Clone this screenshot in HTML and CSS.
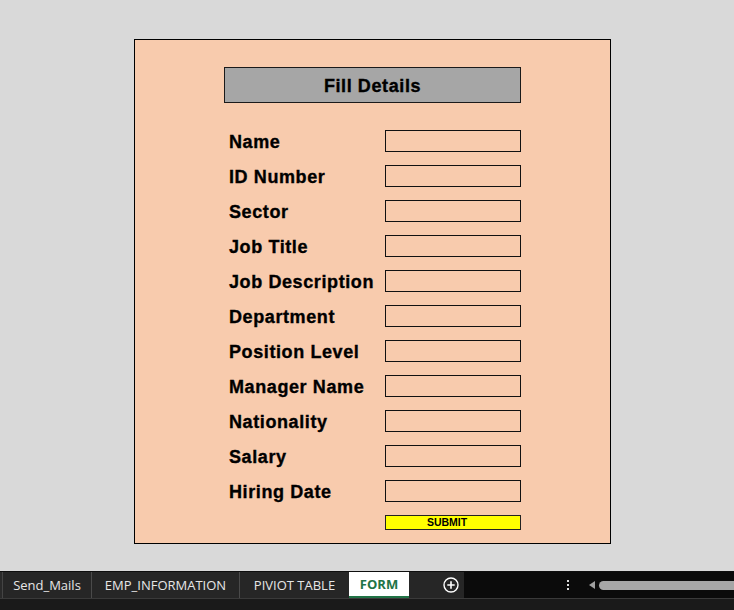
FILE: index.html
```html
<!DOCTYPE html>
<html>
<head>
<meta charset="utf-8">
<link rel="stylesheet" href="styles.css">
</head>
<body>
<div class="sheet">
  <div class="panel">
    <div class="title">Fill Details</div>
    <div class="fields">
      <div class="label">Name</div><div class="box"></div>
      <div class="label">ID Number</div><div class="box"></div>
      <div class="label">Sector</div><div class="box"></div>
      <div class="label">Job Title</div><div class="box"></div>
      <div class="label">Job Description</div><div class="box"></div>
      <div class="label">Department</div><div class="box"></div>
      <div class="label">Position Level</div><div class="box"></div>
      <div class="label">Manager Name</div><div class="box"></div>
      <div class="label">Nationality</div><div class="box"></div>
      <div class="label">Salary</div><div class="box"></div>
      <div class="label">Hiring Date</div><div class="box"></div>
    </div>
    <div class="submit">SUBMIT</div>
  </div>
</div>
<div class="tabbar">
  <div class="tabrow">
    <div class="edge"></div>
    <div class="tab t1">Send_Mails</div>
    <div class="tab t2">EMP_INFORMATION</div>
    <div class="tab t3">PIVIOT TABLE</div>
    <div class="tab active">FORM</div>
    <div class="add">
      <svg width="16" height="16" viewBox="0 0 16 16"><circle cx="8" cy="8" r="7" fill="none" stroke="#fff" stroke-width="1.4"/><path d="M8 4.3v7.4M4.3 8h7.4" stroke="#fff" stroke-width="1.6"/></svg>
    </div>
    <div class="rest">
      <div class="dots"><span></span><span></span><span></span></div>
      <div class="arrow"></div>
      <div class="thumb"></div>
    </div>
  </div>
  <div class="status"></div>
</div>
</body>
</html>
```

FILE: styles.css
```css
html, body {
  margin: 0;
  padding: 0;
}
body {
  width: 734px;
  height: 610px;
  overflow: hidden;
  background: #d9d9d9;
  font-family: "Liberation Sans", Arial, sans-serif;
}
.sheet {
  height: 571px;
  box-sizing: border-box;
  padding: 39px 0 0 134px;
}
.panel {
  width: 477px;
  height: 505px;
  box-sizing: border-box;
  border: 1px solid #000;
  background: #f8cbad;
  padding: 27px 0 0 89px;
}
.title {
  width: 297px;
  height: 36px;
  box-sizing: border-box;
  border: 1px solid #1a1a1a;
  background: #a6a6a6;
  display: flex;
  align-items: center;
  justify-content: center;
  padding-top: 2px;
  font-weight: bold;
  font-size: 18px;
  letter-spacing: 0.6px;
  -webkit-text-stroke: 0.35px #000;
  color: #000;
}
.fields {
  margin-top: 27px;
  display: grid;
  grid-template-columns: 161px 136px;
  grid-auto-rows: 22px;
  row-gap: 13px;
}
.label {
  padding: 2px 0 0 5px;
  display: flex;
  align-items: center;
  font-weight: bold;
  font-size: 18px;
  letter-spacing: 0.6px;
  -webkit-text-stroke: 0.35px #000;
  color: #000;
  white-space: nowrap;
}
.box {
  box-sizing: border-box;
  border: 1px solid #111;
}
.submit {
  margin: 13px 0 0 161px;
  width: 136px;
  height: 15px;
  box-sizing: border-box;
  border: 1px solid #222;
  background: #ffff00;
  padding-right: 12px;
  font-weight: bold;
  font-size: 10.5px;
  line-height: 13px;
  text-align: center;
  color: #000;
}
.tabbar {
  height: 39px;
  background: #0b0b0b;
  font-family: "Open Sans", "Noto Sans", sans-serif;
}
.tabrow {
  height: 27px;
  box-sizing: border-box;
  border-top: 1px solid #0e0e0e;
  display: flex;
}
.edge {
  width: 2px;
  background: #2a2a2a;
  border-right: 1px solid #444;
}
.tab {
  background: #262626;
  color: #e6e6e6;
  font-size: 13px;
  display: flex;
  align-items: center;
  justify-content: center;
  box-sizing: border-box;
}
.t1 { width: 89px; border-right: 1px solid #4a4a4a; }
.t2 { width: 148px; border-right: 1px solid #4a4a4a; }
.t3 { width: 109px; }
.tab.active {
  width: 60px;
  background: #fff;
  color: #217346;
  font-weight: bold;
  border-bottom: 2px solid #217346;
}
.add {
  width: 55px;
  background: #262626;
  display: flex;
  align-items: center;
  justify-content: flex-end;
  padding-right: 5px;
  box-sizing: border-box;
}
.add svg { display: block; }
.rest {
  flex: 1;
  display: flex;
  align-items: center;
  background: #0b0b0b;
}
.dots {
  margin-left: 103px;
  display: flex;
  flex-direction: column;
  gap: 2px;
}
.dots span {
  width: 2px;
  height: 2px;
  background: #ddd;
}
.arrow {
  margin-left: 20px;
  width: 0;
  height: 0;
  border-top: 4px solid transparent;
  border-bottom: 4px solid transparent;
  border-right: 6px solid #a0a0a0;
}
.thumb {
  margin-left: 4px;
  flex: 1;
  height: 9px;
  background: #a6a6a6;
  border-radius: 5px 0 0 5px;
}
.status {
  height: 12px;
  box-sizing: border-box;
  border-top: 1px solid #3a3a3a;
  background: #1a1a1a;
}
```
